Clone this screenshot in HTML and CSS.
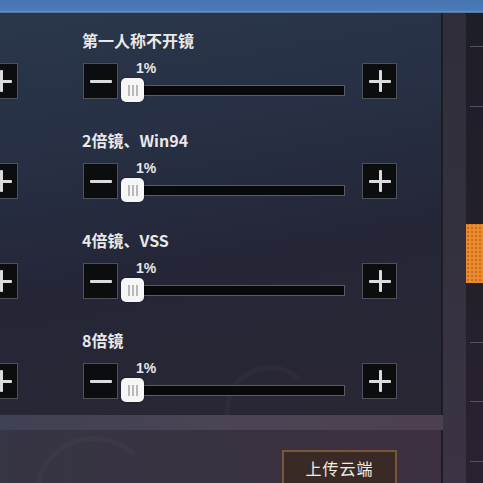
FILE: index.html
```html
<!DOCTYPE html>
<html lang="zh-CN">
<head>
  <meta charset="UTF-8" />
  <meta name="viewport" content="width=device-width, initial-scale=1.0">
  <title>灵敏度设置</title>
  <link rel="stylesheet" href="styles.css">
</head>
<body>
  <div class="top-bar"></div>

  <div class="screen">
    <div class="main-col">
      <div class="panel">
        <div class="arc arc-mid"></div>

        <div class="sens-row">
          <div class="sens-label">第一人称不开镜</div>
          <div class="controls">
            <button class="step-btn edge-btn"><span class="plus"></span></button>
            <button class="step-btn"><span class="minus"></span></button>
            <div class="slider">
              <span class="value">1%</span>
              <div class="track"></div>
              <div class="thumb"><i></i><i></i><i></i></div>
            </div>
            <button class="step-btn"><span class="plus"></span></button>
          </div>
        </div>

        <div class="sens-row">
          <div class="sens-label">2倍镜、Win94</div>
          <div class="controls">
            <button class="step-btn edge-btn"><span class="plus"></span></button>
            <button class="step-btn"><span class="minus"></span></button>
            <div class="slider">
              <span class="value">1%</span>
              <div class="track"></div>
              <div class="thumb"><i></i><i></i><i></i></div>
            </div>
            <button class="step-btn"><span class="plus"></span></button>
          </div>
        </div>

        <div class="sens-row">
          <div class="sens-label">4倍镜、VSS</div>
          <div class="controls">
            <button class="step-btn edge-btn"><span class="plus"></span></button>
            <button class="step-btn"><span class="minus"></span></button>
            <div class="slider">
              <span class="value">1%</span>
              <div class="track"></div>
              <div class="thumb"><i></i><i></i><i></i></div>
            </div>
            <button class="step-btn"><span class="plus"></span></button>
          </div>
        </div>

        <div class="sens-row">
          <div class="sens-label">8倍镜</div>
          <div class="controls">
            <button class="step-btn edge-btn"><span class="plus"></span></button>
            <button class="step-btn"><span class="minus"></span></button>
            <div class="slider">
              <span class="value">1%</span>
              <div class="track"></div>
              <div class="thumb"><i></i><i></i><i></i></div>
            </div>
            <button class="step-btn"><span class="plus"></span></button>
          </div>
        </div>
      </div>

      <div class="divider-band"></div>

      <div class="footer-panel">
        <div class="arc arc-low"></div>
        <button class="upload-btn">上传云端</button>
      </div>
    </div>

    <div class="side-strip"></div>

    <div class="side-tabs">
      <div class="tab-line" style="margin-top: 33px"></div>
      <div class="tab-line" style="margin-top: 59px"></div>
      <div class="orange-tab"></div>
      <div class="tab-line" style="margin-top: 59px"></div>
      <div class="tab-line" style="margin-top: 58px"></div>
      <div class="tab-line" style="margin-top: 59px"></div>
    </div>
  </div>
</body>
</html>
```

FILE: styles.css
```css
:root {
  --text-color: #e8e8e8;
  --btn-bg: #0b0d0e;
  --btn-border: #4c5258;
  --panel-line: #1c1d24;
}

* {
  box-sizing: border-box;
}

html,
body {
  margin: 0;
  width: 483px;
  height: 483px;
  overflow: hidden;
}

body {
  font-family: "Noto Sans CJK SC", "Noto Sans", sans-serif;
  color: var(--text-color);
  background: #26252f;
  display: flex;
  flex-direction: column;
}

.top-bar {
  height: 13px;
  flex-shrink: 0;
  background: linear-gradient(to bottom, #4674b0 0%, #4a7ab8 80%, #6b96c8 92%, #3d5a80 100%);
}

.screen {
  flex: 1;
  display: flex;
}

.main-col {
  width: 443px;
  display: flex;
  flex-direction: column;
}

.panel {
  position: relative;
  height: 402px;
  padding-top: 17px;
  overflow: hidden;
  background: linear-gradient(170deg, #2a374b 0%, #273044 30%, #242637 60%, #2a2734 100%);
  border-right: 2px solid var(--panel-line);
}

.sens-row {
  height: 100px;
  position: relative;
}

.sens-label {
  margin-left: 82px;
  height: 20px;
  line-height: 20px;
  font-size: 16px;
  font-weight: bold;
  margin-bottom: 13px;
}

.controls {
  display: flex;
  align-items: flex-start;
  height: 36px;
}

.step-btn {
  width: 35px;
  height: 36px;
  padding: 0;
  background: var(--btn-bg);
  border: 1px solid var(--btn-border);
  display: flex;
  align-items: center;
  justify-content: center;
  flex-shrink: 0;
}

.edge-btn {
  margin-left: -17px;
  margin-right: 65px;
}

.minus,
.plus {
  position: relative;
  width: 22px;
  height: 22px;
}

.minus::before,
.plus::before,
.plus::after {
  content: "";
  position: absolute;
  background: #dcdcdc;
  border-radius: 1px;
}

.minus::before,
.plus::before {
  left: 0;
  right: 0;
  top: 10px;
  height: 3px;
}

.plus::after {
  top: 0;
  bottom: 0;
  left: 10px;
  width: 3px;
}

.slider {
  position: relative;
  width: 223px;
  height: 40px;
  margin: 0 17px 0 4px;
  flex-shrink: 0;
}

.track {
  position: absolute;
  left: 0;
  top: 22px;
  width: 223px;
  height: 11px;
  background: #08090b;
  border: 1px solid #5a5c62;
}

.thumb {
  position: absolute;
  left: -1px;
  top: 15px;
  width: 23px;
  height: 24px;
  background: #f6f6f6;
  border-radius: 5px;
  box-shadow: 0 0 2px rgba(0, 0, 0, 0.6);
  display: flex;
  justify-content: center;
  align-items: center;
  gap: 2px;
}

.thumb i {
  width: 2px;
  height: 11px;
  background: #b8b8b8;
}

.value {
  position: absolute;
  left: 14px;
  top: -3px;
  font-size: 14px;
  font-weight: bold;
  line-height: 16px;
  font-family: "Liberation Sans", Arial, sans-serif;
}

.arc {
  position: absolute;
  border-radius: 50%;
  border: 5px solid rgba(255, 255, 255, 0.025);
  border-right-color: transparent;
  border-bottom-color: transparent;
}

.arc-mid {
  left: 225px;
  top: 352px;
  width: 90px;
  height: 90px;
}

.arc-low {
  left: 34px;
  top: 6px;
  width: 120px;
  height: 120px;
}

.divider-band {
  height: 15px;
  background: linear-gradient(to right, #3f4154, #4b4454 50%, #4d4050);
}

.footer-panel {
  position: relative;
  flex: 1;
  overflow: hidden;
  background: linear-gradient(to right, #363544, #3a3240 60%, #3d3140);
  border-right: 2px solid var(--panel-line);
}

.upload-btn {
  position: relative;
  margin: 20px 0 0 282px;
  width: 115px;
  height: 36px;
  background: #3a2a26;
  border: 2px solid #7c5537;
  color: #f0ece8;
  font-family: "Noto Sans CJK SC", sans-serif;
  font-size: 16px;
  letter-spacing: 1px;
  padding: 0;
  line-height: 30px;
}

.side-strip {
  width: 23px;
  background: linear-gradient(to bottom, #2f2e3a, #34313f 50%, #3c3344);
}

.side-tabs {
  flex: 1;
  background: linear-gradient(to bottom, #1e1e27, #24202a 60%, #2b2230);
  display: flex;
  flex-direction: column;
}

.tab-line {
  height: 1px;
  margin-left: 4px;
  background: #55545e;
}

.orange-tab {
  margin-top: 117px;
  height: 59px;
  background: #ec8a2f;
  background-image: radial-gradient(circle, rgba(160, 80, 20, 0.5) 1px, transparent 1.2px);
  background-size: 4px 4px;
  background-position: 8px 22px;
}
```
